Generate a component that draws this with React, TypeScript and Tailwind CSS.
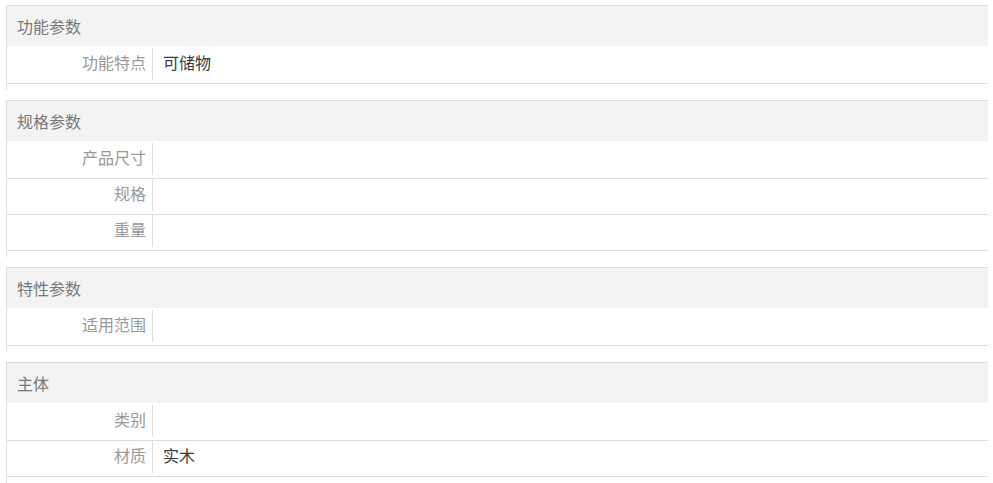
import React from "react";

type Row = { label: string; value?: string };
type Section = { title: string; rows: Row[] };

const sections: Section[] = [
  { title: "功能参数", rows: [{ label: "功能特点", value: "可储物" }] },
  {
    title: "规格参数",
    rows: [{ label: "产品尺寸" }, { label: "规格" }, { label: "重量" }],
  },
  { title: "特性参数", rows: [{ label: "适用范围" }] },
  { title: "主体", rows: [{ label: "类别" }, { label: "材质", value: "实木" }] },
];

export default function App() {
  return (
    <div
      className="w-[993px] h-[483px] overflow-hidden bg-white pt-[5px] pl-[6px] pr-[5px] text-[16px]"
      style={{ fontFamily: '"Noto Sans CJK SC", "Noto Sans", sans-serif' }}
    >
      {sections.map((s) => (
        <div key={s.title} className="border-t border-l border-[#dddddd] pb-[6px] mb-[10px]">
          <div className="h-[40px] bg-[#f3f3f3] flex items-center pl-[10px] pb-[1px] text-[#777777] leading-none">
            {s.title}
          </div>
          <div className="pt-[2px]">
            {s.rows.map((r) => (
              <div key={r.label} className="h-[36px] border-b border-[#dddddd] flex items-start">
                <div className="w-[146px] h-[32px] border-r border-[#dddddd] flex items-center justify-end pr-[6px] pb-[4px] text-[#999999] leading-none">
                  {r.label}
                </div>
                <div className="h-[32px] flex items-center pl-[10px] pb-[4px] text-[#3a3a3a] leading-none">
                  {r.value ?? ""}
                </div>
              </div>
            ))}
          </div>
        </div>
      ))}
    </div>
  );
}
